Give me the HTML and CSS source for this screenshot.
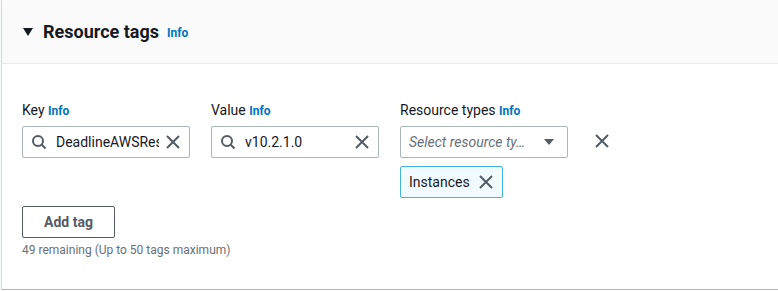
FILE: index.html
```html
<!DOCTYPE html>
<html lang="en">
<head>
    <meta charset="UTF-8">
    <meta name="viewport" content="width=device-width, initial-scale=1.0">
    <title>Resource tags</title>
    <link rel="stylesheet" href="styles.css">
</head>
<body>

<section class="panel">
    <header class="panel-header">
        <svg class="caret" width="12" height="12" viewBox="0 0 12 12"><path d="M1 2h10L6 10z" fill="#16191f"/></svg>
        <h2>Resource tags</h2>
        <a class="info" href="#">Info</a>
    </header>

    <div class="panel-body">
        <div class="tag-row">
            <div class="field">
                <label>Key <a class="info" href="#">Info</a></label>
                <div class="input">
                    <svg class="icon" width="16" height="16" viewBox="0 0 16 16"><circle cx="7" cy="7" r="5" fill="none" stroke="#545b64" stroke-width="2"/><path d="M10.5 10.5L14.5 14.5" stroke="#545b64" stroke-width="2"/></svg>
                    <span class="value">DeadlineAWSRes</span>
                    <svg class="icon clear" width="16" height="16" viewBox="0 0 16 16"><path d="M2 2l12 12M14 2L2 14" stroke="#545b64" stroke-width="2"/></svg>
                </div>
            </div>
            <div class="field">
                <label>Value <a class="info" href="#">Info</a></label>
                <div class="input">
                    <svg class="icon" width="16" height="16" viewBox="0 0 16 16"><circle cx="7" cy="7" r="5" fill="none" stroke="#545b64" stroke-width="2"/><path d="M10.5 10.5L14.5 14.5" stroke="#545b64" stroke-width="2"/></svg>
                    <span class="value">v10.2.1.0</span>
                    <svg class="icon clear" width="16" height="16" viewBox="0 0 16 16"><path d="M2 2l12 12M14 2L2 14" stroke="#545b64" stroke-width="2"/></svg>
                </div>
            </div>
            <div class="field">
                <label>Resource types <a class="info" href="#">Info</a></label>
                <div class="input select">
                    <span class="placeholder">Select resource ty…</span>
                    <svg class="icon" width="12" height="12" viewBox="0 0 12 12"><path d="M1 3h10L6 9z" fill="#545b64"/></svg>
                </div>
                <div class="token">
                    <span>Instances</span>
                    <svg class="icon" width="16" height="16" viewBox="0 0 16 16"><path d="M2 2l12 12M14 2L2 14" stroke="#545b64" stroke-width="2"/></svg>
                </div>
            </div>
            <button class="remove">
                <svg width="16" height="16" viewBox="0 0 16 16"><path d="M2 2l12 12M14 2L2 14" stroke="#545b64" stroke-width="2"/></svg>
            </button>
        </div>

        <button class="add-tag">Add tag</button>
        <p class="hint">49 remaining (Up to 50 tags maximum)</p>
    </div>
</section>

</body>
</html>
```

FILE: styles.css
```css
body {
    margin: 0;
    font-family: Roboto, "Noto Sans", Arial, sans-serif;
    color: #16191f;
    background: #fff;
}
.panel {
    margin-left: 1px;
    height: 289px;
    border-left: 1px solid #d5dbdb;
    border-bottom: 1px solid #aab7b8;
    box-shadow: 0 1px 1px rgba(0, 28, 36, 0.2);
}
.panel-header {
    display: flex;
    align-items: center;
    height: 63px;
    padding-left: 20px;
    background: #fafafa;
    border-bottom: 1px solid #eaeded;
}
.caret {
    margin-right: 9px;
}
.panel-header h2 {
    margin: 0 8px 0 0;
    font-size: 18px;
    font-weight: 700;
}
.info {
    color: #0073bb;
    font-size: 12px;
    font-weight: 700;
    text-decoration: none;
}
.panel-header .info {
    margin-top: 3px;
}
.panel-body {
    padding: 35px 20px 0 20px;
}
.tag-row {
    display: flex;
    gap: 21px;
}
.field {
    width: 168px;
}
.field label {
    display: block;
    font-size: 14px;
    line-height: 22px;
    margin-bottom: 4px;
}
.input {
    display: flex;
    align-items: center;
    box-sizing: border-box;
    height: 32px;
    padding: 0 8px;
    border: 1px solid #aab7b8;
    border-radius: 2px;
    font-size: 14px;
}
.input .value {
    flex: 1;
    margin-left: 9px;
    overflow: hidden;
    white-space: nowrap;
    text-overflow: clip;
}
.input .clear {
    margin-left: 6px;
    flex: none;
}
.icon {
    flex: none;
}
.select {
    justify-content: space-between;
    padding-right: 12px;
}
.placeholder {
    color: #687078;
    font-style: italic;
}
.token {
    display: inline-flex;
    align-items: center;
    gap: 8px;
    box-sizing: border-box;
    height: 32px;
    margin-top: 8px;
    padding: 0 8px 0 8px;
    background: #f1faff;
    border: 1px solid #45b4dc;
    border-radius: 2px;
    font-size: 14px;
}
.remove {
    align-self: flex-start;
    margin-top: 26px;
    margin-left: 0;
    width: 26px;
    height: 32px;
    padding: 0;
    border: none;
    background: none;
    display: flex;
    align-items: center;
    justify-content: center;
}
.add-tag {
    margin-top: 8px;
    height: 32px;
    padding: 0 21px;
    border: 1px solid #545b64;
    border-radius: 2px;
    background: #fff;
    color: #545b64;
    font-family: inherit;
    font-size: 14px;
    font-weight: 700;
}
.hint {
    margin: 4px 0 0;
    font-size: 12px;
    line-height: 16px;
    color: #687078;
}
```
